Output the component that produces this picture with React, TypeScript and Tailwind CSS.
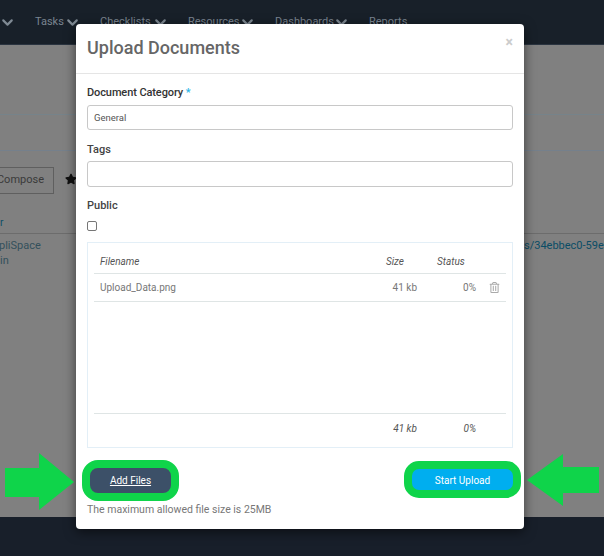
import { ChevronDown } from "lucide-react"
import { FaRegTrashAlt, FaStar } from "react-icons/fa"

const navItems = [
	{ label: "Tasks", width: "w-[28px]", caret: true },
	{ label: "Checklists", width: "w-[51px]", caret: true },
	{ label: "Resources", width: "w-[50px]", caret: true },
	{ label: "Dashboards", width: "w-[57px]", caret: true },
	{ label: "Reports", width: "w-[36px]", caret: false },
]

function Caret() {
	return (
		<span className="flex w-[9px] justify-center">
			<ChevronDown size={17} strokeWidth={3} className="shrink-0 text-[#7f8a94]" />
		</span>
	)
}

function Background() {
	return (
		<div className="flex h-[556px] flex-col bg-[#808080]">
			<div className="flex h-[45px] shrink-0 items-center gap-[23px] border-b border-[#2a3440] bg-[#182029] pl-[3px] text-[11px] text-[#7a8490]">
				<Caret />
				{navItems.map((item) => (
					<div key={item.label} className="flex items-center gap-[5px]">
						<span className={`${item.width} whitespace-nowrap`}>{item.label}</span>
						{item.caret && <Caret />}
					</div>
				))}
			</div>
			<div className="h-[70px] shrink-0 border-b border-[#76838a]" />
			<div className="h-[36px] shrink-0 border-b border-[#75808c]" />
			<div className="flex h-[59px] shrink-0 items-center gap-[10px] text-[11px] text-[#3a3a3a]">
				<div className="-ml-[40px] flex h-[27px] w-[94px] items-center justify-end border border-[#5f5f5f] pr-[9px]">Compose</div>
				<FaStar size={12} className="ml-[1px] -translate-y-[2px] text-[#111]" />
			</div>
			<div className="flex h-[24px] shrink-0 items-end border-b border-[#6c6c6c] pb-[3px] text-[10px] text-[#0a4d66]">
				<span>r</span>
			</div>
			<div className="flex justify-between pt-[4px] text-[11px] leading-[15px]">
				<div className="text-[#33505c]">
					<div className="-ml-[1px]">pliSpace</div>
					<div>in</div>
				</div>
				<div className="w-[80px] overflow-hidden whitespace-nowrap text-[#0a4d66]">s/34ebbec0-59e0-</div>
			</div>
			<div className="flex-1" />
			<div className="h-[39px] shrink-0 bg-[#181f2a]" />
		</div>
	)
}

function Arrows() {
	return (
		<>
			<svg className="absolute left-0 top-[450px]" width="80" height="64" viewBox="0 0 80 64">
				<polygon points="5,18 39,18 39,3 74,32 39,60 39,47 5,47" fill="#0fd44a" />
			</svg>
			<svg className="absolute left-[524px] top-[450px]" width="80" height="64" viewBox="0 0 80 64">
				<polygon points="3,30 39,4 39,17 75,17 75,43 39,43 39,56" fill="#0fd44a" />
			</svg>
		</>
	)
}

function FileRow({ className, children }: { className: string; children: React.ReactNode }) {
	return <div className={`grid grid-cols-[286px_43px_60px_23px] items-center ${className}`}>{children}</div>
}

function UploadModal() {
	return (
		<div className="absolute left-[76px] top-[24px] h-[505px] w-[448px] rounded-[4px] bg-white shadow-[0_3px_12px_rgba(0,0,0,0.55)]">
			<div className="relative flex h-[50px] items-center border-b border-[#e5e5e5] pb-[3px] pl-[11px]">
				<h2 className="text-[18px] font-medium text-[#666]">Upload Documents</h2>
				<span className="absolute right-[11px] top-[9px] text-[14px] font-bold leading-[18px] text-[#ccc]">×</span>
			</div>
			<div className="px-[11px]">
				<label className="mt-[11px] block h-[15px] text-[11px] font-medium leading-[15px] tracking-[-0.1px] text-[#333]">
					Document Category <span className="text-[#29b6e8]">*</span>
				</label>
				<div className="mt-[5px] flex h-[25px] items-center rounded-[3px] border border-[#c8c8c8] px-[6px] pt-[1px] text-[9.5px] text-[#555]">General</div>
				<label className="mt-[12px] block h-[15px] text-[11px] font-medium leading-[15px] text-[#444]">Tags</label>
				<div className="mt-[4px] h-[26px] rounded-[3px] border border-[#c8c8c8]" />
				<label className="mt-[11px] block h-[15px] text-[11px] font-medium leading-[15px] text-[#444]">Public</label>
				<div className="mt-[8px] h-[10px] w-[10px] rounded-[2px] border border-[#767676]" />
				<div className="mt-[11px] h-[206px] border border-[#e3eff7] px-[6px] text-[10px] text-[#777]">
					<FileRow className="mt-[7px] h-[24px] border-b border-[#dfe5e5] pb-[1px] italic text-[#555]">
						<span className="pl-[6px]">Filename</span>
						<span className="pl-[6px]">Size</span>
						<span className="pl-[14px]">Status</span>
						<span />
					</FileRow>
					<FileRow className="h-[28px] border-b border-[#dfe5e5]">
						<span className="pl-[6px]">Upload_Data.png</span>
						<span className="pr-[6px] text-right">41 kb</span>
						<span className="pr-[7px] text-right">0%</span>
						<FaRegTrashAlt size={11} className="ml-[6px] text-[#aaa]" />
					</FileRow>
					<FileRow className="mt-[111px] h-[30px] border-t border-[#dfe5e5] italic text-[#555]">
						<span />
						<span className="pr-[6px] text-right">41 kb</span>
						<span className="pr-[7px] text-right">0%</span>
						<span />
					</FileRow>
				</div>
				<div className="mt-[12px] flex items-start justify-between">
					<button className="-ml-[5px] flex h-[41px] w-[97px] items-center justify-center rounded-[16px] border-[8px] border-[#0fd44a] bg-[#3c5068] text-[10px] text-white underline">
						Add Files
					</button>
					<button className="-mr-[8px] mt-[1px] flex h-[37px] w-[117px] items-center justify-center rounded-[15px] border-[8px] border-[#0fd44a] bg-[#00aeef] pt-[1px] text-[10px] text-white">
						Start Upload
					</button>
				</div>
				<p className="mt-[1px] text-[10.5px] leading-[15px] text-[#777]">The maximum allowed file size is 25MB</p>
			</div>
		</div>
	)
}

export default function App() {
	return (
		<div className="relative h-[556px] w-[604px] overflow-hidden font-['Roboto',sans-serif]">
			<Background />
			<UploadModal />
			<Arrows />
		</div>
	)
}
